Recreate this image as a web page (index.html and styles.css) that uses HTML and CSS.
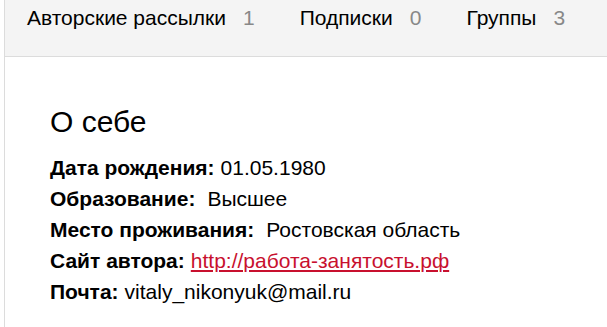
FILE: index.html
```html
<!DOCTYPE html>
<html lang="ru">
<head>
<meta charset="utf-8">
<link rel="stylesheet" href="styles.css">
</head>
<body>
<div class="page">
  <nav class="tabs">
    <a class="tab">Авторские рассылки<span class="count">1</span></a>
    <a class="tab">Подписки<span class="count">0</span></a>
    <a class="tab">Группы<span class="count">3</span></a>
  </nav>
  <section class="about">
    <h2 class="title">О себе</h2>
    <div class="row"><b class="label">Дата рождения:</b><span class="v1">01.05.1980</span></div>
    <div class="row"><b class="label">Образование:</b><span class="v2">Высшее</span></div>
    <div class="row"><b class="label">Место проживания:</b><span class="v3">Ростовская область</span></div>
    <div class="row"><b class="label">Сайт автора:</b><a class="link v4" href="#">http://работа-занятость.рф</a></div>
    <div class="row"><b class="label">Почта:</b><span class="v4">vitaly_nikonyuk@mail.ru</span></div>
  </section>
</div>
</body>
</html>
```
FILE: styles.css
```css
html, body {
  margin: 0;
  padding: 0;
  background: #fff;
}
body {
  font-family: "Liberation Sans", Arial, sans-serif;
  color: #000;
}
.page {
  margin-left: 4px;
  border-left: 1px solid #dcdcdc;
  min-height: 327px;
}
.tabs {
  display: flex;
  gap: 45px;
  height: 57px;
  background: #f4f4f4;
  border-bottom: 1px solid #dcdcdc;
  padding: 6px 0 0 22px;
  box-sizing: border-box;
  font-size: 21px;
  line-height: 24px;
}
.tab {
  color: #000;
  text-decoration: none;
}
.count {
  color: #888;
  margin-left: 17px;
}
.about {
  padding: 48px 0 0 45px;
}
.title {
  font-weight: normal;
  font-size: 30px;
  line-height: 34px;
  margin: 0 0 13px;
}
.row {
  font-size: 21px;
  line-height: 31px;
}
.label {
  font-weight: bold;
}
.v1 { margin-left: 6px; }
.v2 { margin-left: 12px; }
.v3 { margin-left: 12px; }
.v4 { margin-left: 6px; }
.link {
  color: #c8102e;
  text-decoration: underline;
}
```
